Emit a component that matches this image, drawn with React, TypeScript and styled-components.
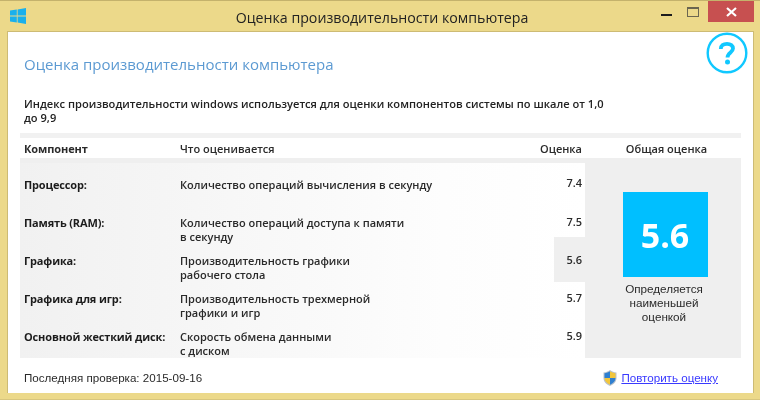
import React from 'react'
import styled, { createGlobalStyle } from 'styled-components'

const GlobalStyle = createGlobalStyle`
  html, body {
    margin: 0;
    padding: 0;
    background: #ecd98a;
  }
`

const Frame = styled.div`
  box-sizing: border-box;
  width: 760px;
  height: 400px;
  display: flex;
  flex-direction: column;
  padding: 0 6px 6px 7px;
  background: #ecd98a;
  border-top: 1px solid #c4b26c;
  border-bottom: 1px solid #d8c67e;
  filter: blur(0.35px);
  color: #1c1c1c;
  font-family: 'Open Sans', 'Noto Sans', sans-serif;
`

const TitleBar = styled.div`
  height: 30px;
  flex: none;
  display: grid;
  grid-template-columns: 1fr auto 1fr;
  margin-left: 3px;
`

const Logo = styled.svg`
  width: 16px;
  height: 16px;
  margin-top: 7px;
`

const Caption = styled.div`
  font-size: 14.2px;
  line-height: 20px;
  padding-top: 7px;
  color: #222;
`

const Controls = styled.div`
  display: flex;
  justify-content: flex-end;
  align-items: flex-start;
`

const MinButton = styled.div`
  width: 11px;
  height: 2px;
  margin-top: 13px;
  background: #1c1c1c;
`

const MaxButton = styled.div`
  box-sizing: border-box;
  width: 12px;
  height: 10px;
  margin: 6px 9px 0 15px;
  border: 1px solid #6b6650;
  border-top-width: 2px;
`

const CloseButton = styled.div`
  width: 46px;
  height: 21px;
  display: flex;
  align-items: center;
  justify-content: center;
  background: #c75050;
`

const Content = styled.div`
  flex: 1;
  display: flex;
  flex-direction: column;
  background: #fff;
  border: 1px solid #cdbb74;
  border-bottom: 0;
  padding: 0 0 0 12px;
`

const HeadRow = styled.div`
  height: 44px;
  display: flex;
  justify-content: space-between;
  align-items: flex-start;
  padding: 0 5px 0 4px;
`

const Heading = styled.h1`
  margin: 22px 0 0;
  font-size: 15px;
  line-height: 20px;
  font-weight: 400;
  color: #5c9ad2;
`

const HelpIcon = styled.svg`
  width: 42px;
  height: 42px;
`

const Intro = styled.p`
  width: 590px;
  margin: 21px 0 0 4px;
  font-size: 11.1px;
  line-height: 14px;
  font-weight: 600;
  color: #222;
`

const Strip = styled.div`
  width: 721px;
  height: 5px;
  margin-top: 8px;
  background: #f1f1f1;
`

const Columns = styled.div`
  display: grid;
  width: 721px;
  grid-template-columns: 160px 1fr 62px 156px;
  align-items: center;
  height: 20px;
  font-size: 11px;
  font-weight: 600;
  color: #2a2a2a;
`

const NameHead = styled.div`
  padding-left: 4px;
  font-weight: 700;
  letter-spacing: -0.1px;
`

const ScoreHead = styled.div`
  text-align: right;
  padding-right: 3px;
`

const TotalHead = styled.div`
  text-align: center;
  padding-left: 7px;
`

const Body = styled.div`
  width: 721px;
  height: 200px;
  display: flex;
  background: #efefef;
  padding-top: 5px;
  box-sizing: border-box;
`

const Rows = styled.div`
  width: 565px;
  background: linear-gradient(90deg, #f1f1f1 0%, #fdfdfd 75%, #fff 100%);
`

const Row = styled.div<{ $first?: boolean }>`
  display: grid;
  grid-template-columns: 160px 1fr 31px;
  height: ${({ $first }) => ($first ? '36px' : '38px')};
  font-size: 11px;
  line-height: 14px;
  font-weight: 600;
  color: #2a2a2a;
`

const Name = styled.div<{ $first?: boolean }>`
  padding: ${({ $first }) => ($first ? '15px' : '17px')} 0 0 4px;
  font-weight: 700;
  letter-spacing: -0.15px;
  color: #1c1c1c;
`

const Desc = styled.div<{ $first?: boolean }>`
  padding-top: ${({ $first }) => ($first ? '15px' : '17px')};
  white-space: pre-line;
`

const Score = styled.div<{ $first?: boolean; $lowest?: boolean }>`
  padding: ${({ $first }) => ($first ? '13px' : '16px')} 3px 0 0;
  text-align: right;
  background: ${({ $lowest }) => ($lowest ? '#efefef' : 'transparent')};
`

const Total = styled.div`
  flex: 1;
  display: flex;
  flex-direction: column;
  align-items: center;
  padding: 29px 0 0 4px;
`

const Tile = styled.div`
  width: 85px;
  height: 85px;
  display: flex;
  align-items: center;
  justify-content: center;
  background: #00bfff;
  color: #fff;
  font-size: 34px;
  font-weight: 700;
`

const TileNote = styled.div`
  width: 100px;
  margin-top: 5px;
  padding-right: 2px;
  text-align: center;
  font-family: 'Liberation Sans', Arial, sans-serif;
  font-size: 11.7px;
  line-height: 14px;
  color: #2a2a2a;
`

const Footer = styled.div`
  box-sizing: border-box;
  width: 698px;
  height: 35px;
  display: flex;
  justify-content: space-between;
  align-items: center;
  padding: 4px 0 0 4px;
  font-family: 'Liberation Sans', Arial, sans-serif;
  font-size: 11.6px;
  color: #2a2a2a;
`

const Retry = styled.div`
  display: flex;
  align-items: center;
  gap: 4px;
`

const RetryLink = styled.a`
  color: #3a3aff;
  text-decoration: underline;
`

const rows = [
  { name: 'Процессор:', desc: 'Количество операций вычисления в секунду', score: '7.4' },
  { name: 'Память (RAM):', desc: 'Количество операций доступа к памяти\nв секунду', score: '7.5' },
  { name: 'Графика:', desc: 'Производительность графики\nрабочего стола', score: '5.6', lowest: true },
  { name: 'Графика для игр:', desc: 'Производительность трехмерной\nграфики и игр', score: '5.7' },
  { name: 'Основной жесткий диск:', desc: 'Скорость обмена данными\nс диском', score: '5.9' }
]

export default function App() {
  return (
    <>
      <GlobalStyle />
      <Frame>
        <TitleBar>
          <Logo viewBox="0 0 16 16">
            <path d="M0 2.6 6.8 1.6V7.6H0ZM7.6 1.5 16 0V7.6H7.6ZM0 8.4H6.8V14.4L0 13.4ZM7.6 8.4H16V16L7.6 14.5Z" fill="#1ab0ec" />
          </Logo>
          <Caption>Оценка производительности компьютера</Caption>
          <Controls>
            <MinButton />
            <MaxButton />
            <CloseButton>
              <svg width="11" height="10" viewBox="0 0 11 10">
                <path d="M1 1 10 9M10 1 1 9" stroke="#fff" strokeWidth="2.2" fill="none" />
              </svg>
            </CloseButton>
          </Controls>
        </TitleBar>
        <Content>
          <HeadRow>
            <Heading>Оценка производительности компьютера</Heading>
            <HelpIcon viewBox="0 0 42 42">
              <circle cx="21" cy="21" r="19.3" fill="none" stroke="#10c8ff" strokeWidth="2.4" />
              <path d="M14.8 17C14.8 13.5 17.5 11.8 21 11.8S27 13.6 27 16.6C27 20.4 21.5 20.6 21.5 25.5" fill="none" stroke="#10c8ff" strokeWidth="3.8" />
              <circle cx="21.5" cy="30" r="2.5" fill="#10c8ff" />
            </HelpIcon>
          </HeadRow>
          <Intro>Индекс производительности windows используется для оценки компонентов системы по шкале от 1,0 до 9,9</Intro>
          <Strip />
          <Columns>
            <NameHead>Компонент</NameHead>
            <div>Что оценивается</div>
            <ScoreHead>Оценка</ScoreHead>
            <TotalHead>Общая оценка</TotalHead>
          </Columns>
          <Body>
            <Rows>
              {rows.map((row, i) => (
                <Row key={row.name} $first={i === 0}>
                  <Name $first={i === 0}>{row.name}</Name>
                  <Desc $first={i === 0}>{row.desc}</Desc>
                  <Score $first={i === 0} $lowest={row.lowest}>{row.score}</Score>
                </Row>
              ))}
            </Rows>
            <Total>
              <Tile>5.6</Tile>
              <TileNote>Определяется наименьшей оценкой</TileNote>
            </Total>
          </Body>
          <Footer>
            <span>Последняя проверка: 2015-09-16</span>
            <Retry>
              <svg width="14" height="16" viewBox="0 0 14 16">
                <path d="M7 0C5 1.5 3 2.2 0.5 2.4V8C0.5 11.5 3 14.5 7 16 11 14.5 13.5 11.5 13.5 8V2.4C11 2.2 9 1.5 7 0Z" fill="#b9c2cc" />
                <path d="M7 1.2V8H1.5V3.2C3.5 3 5.4 2.3 7 1.2Z" fill="#2f7fd0" />
                <path d="M7 1.2C8.6 2.3 10.5 3 12.5 3.2V8H7Z" fill="#f2c63c" />
                <path d="M1.5 8H7V14.8C3.8 13.5 1.5 11 1.5 8Z" fill="#f2c63c" />
                <path d="M7 8H12.5C12.5 11 10.2 13.5 7 14.8Z" fill="#2f7fd0" />
              </svg>
              <RetryLink href="#">Повторить оценку</RetryLink>
            </Retry>
          </Footer>
        </Content>
      </Frame>
    </>
  )
}
